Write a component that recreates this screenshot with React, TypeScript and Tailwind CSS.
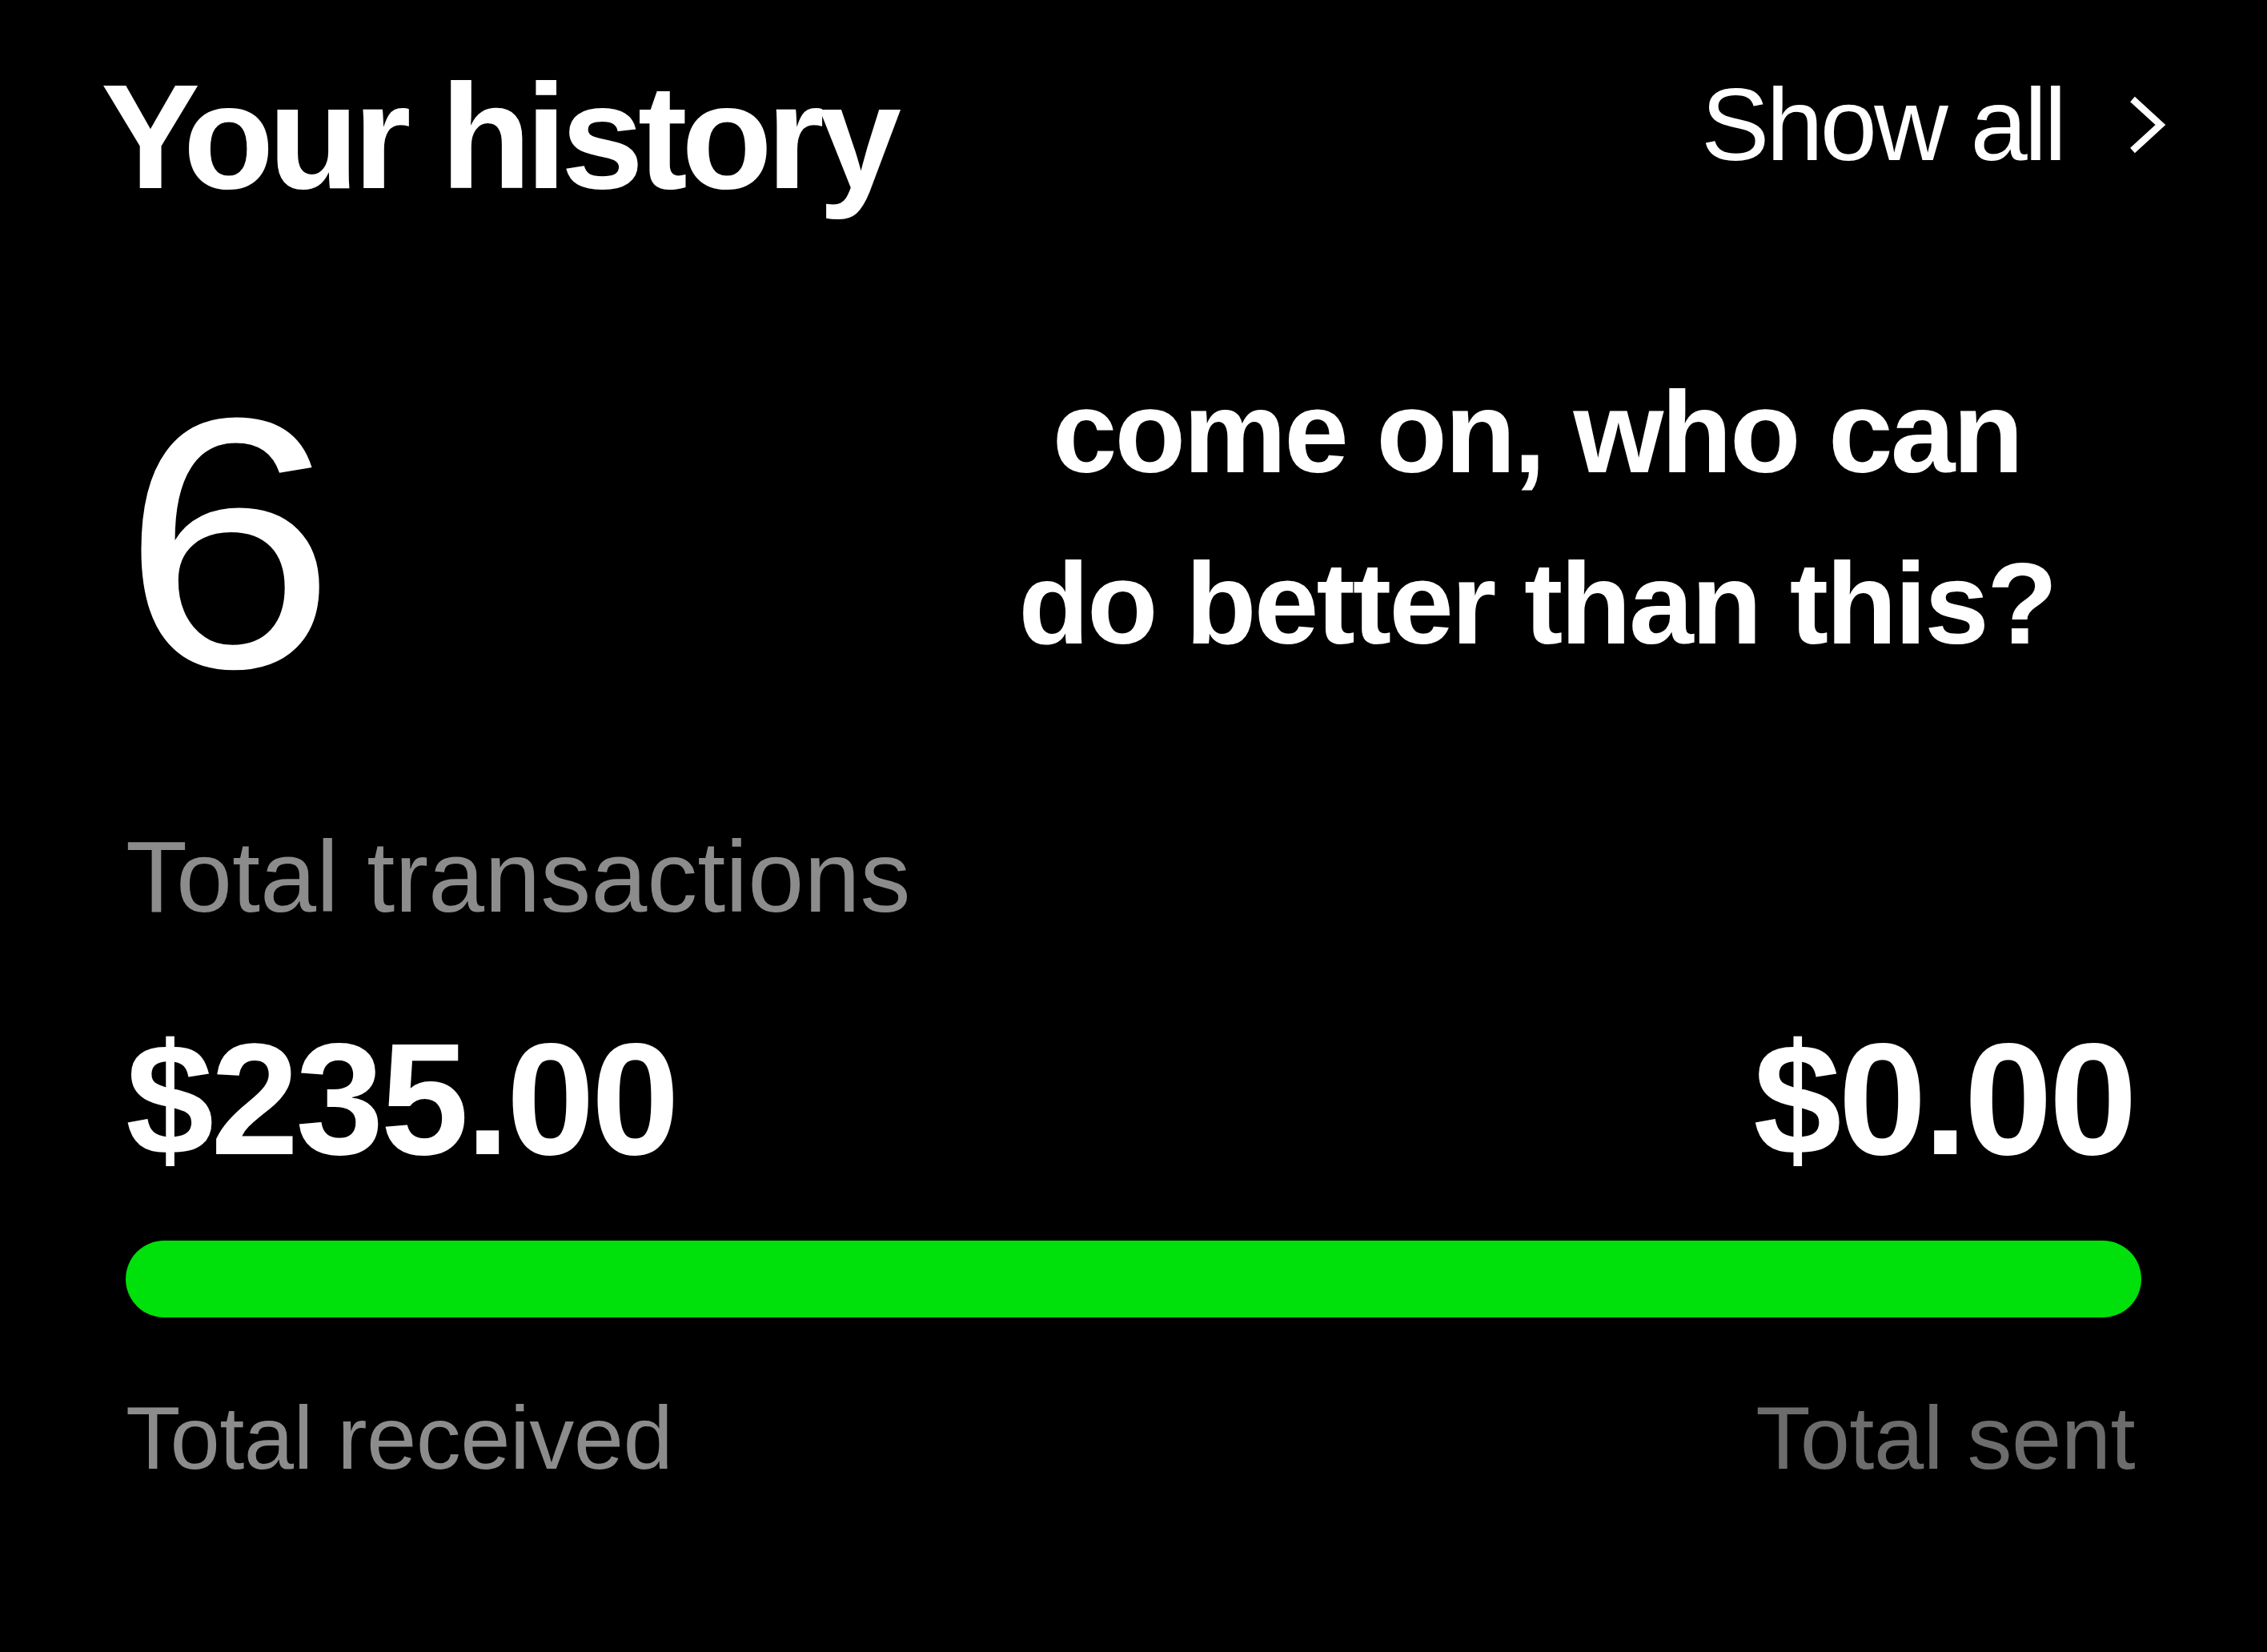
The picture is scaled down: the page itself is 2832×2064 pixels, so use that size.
import React from "react";

export default function App() {
  return (
    <div className="w-[2832px] h-[2064px] bg-black text-white overflow-hidden font-['Liberation_Sans',Arial,sans-serif]">
      <header className="flex justify-between items-start pl-[126px] pr-[126px] pt-[78px]">
        <h1 className="text-[186px] leading-none font-bold tracking-[-0.04em]">Your history</h1>
        <div className="flex items-center mt-[14px]">
          <span className="text-[128px] leading-none tracking-[-0.03em]">Show all</span>
          <svg className="ml-[80px]" width="48" height="72" viewBox="0 0 48 72" fill="none">
            <path d="M6 4 L41 36 L6 68" stroke="white" strokeWidth="8.5" />
          </svg>
        </div>
      </header>

      <div className="px-[157px]">
        <div className="flex justify-between items-start mt-[169px]">
          <div className="text-[446px] leading-none mt-[23px] -ml-[5px] scale-x-[1.08] origin-left">6</div>
          <div className="w-[1510px] text-center text-[145px] leading-[214px] font-bold tracking-[-0.02em]">
            come on, who can
            <br />
            do better than this?
          </div>
        </div>

        <div className="mt-[131px] text-[126px] leading-none text-[#8c8c8c]">
          Total transactions
        </div>

        <div className="mt-[116px] flex justify-between pr-[9px]">
          <span className="text-[198px] leading-none font-bold tracking-[-0.02em]">$235.00</span>
          <span className="text-[198px] leading-none font-bold tracking-[-0.02em]">$0.00</span>
        </div>

        <div className="mt-[77px] h-[96px] rounded-full bg-[#00e00a]" />

        <div className="mt-[95px] flex justify-between pr-[8px] text-[112px] leading-none tracking-[-0.005em]">
          <span className="text-[#8c8c8c]">Total received</span>
          <span className="text-[#6c6c6c]">Total sent</span>
        </div>
      </div>
    </div>
  );
}
